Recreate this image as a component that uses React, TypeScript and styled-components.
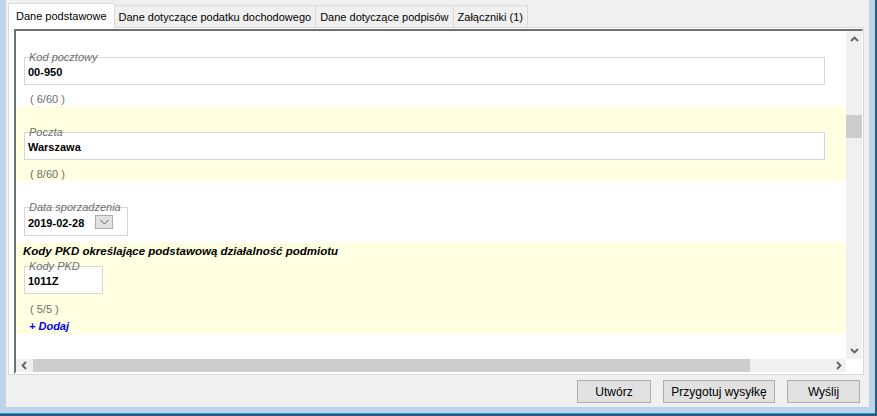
import React from 'react';
import styled, { createGlobalStyle } from 'styled-components';

const GlobalStyle = createGlobalStyle`
  html, body {
    margin: 0;
    padding: 0;
    background: #2a5878;
  }
  body {
    font-family: "Liberation Sans", Arial, sans-serif;
  }
  * {
    box-sizing: border-box;
  }
`;

const Desktop = styled.div`
  width: 877px;
  height: 416px;
  display: flex;
  padding: 0 2px 3px 0;
  background: #2a5878;
  overflow: hidden;
`;

const Frame = styled.div`
  flex: 1;
  display: flex;
  flex-direction: column;
  background: #f0f0f0;
  border: 6px solid #bcd3ea;
  border-top: 0;
  box-shadow: 0 1px 0 #1ba1dc;
  padding: 3px 5px 0 2px;
`;

const TabBar = styled.div`
  display: flex;
  align-items: flex-end;
  height: 24px;
  position: relative;
  z-index: 2;
`;

const Tab = styled.div<{ $active?: boolean }>`
  display: flex;
  align-items: center;
  height: ${(p) => (p.$active ? 25 : 22)}px;
  margin-bottom: ${(p) => (p.$active ? -1 : 0)}px;
  margin-left: ${(p) => (p.$active ? 0 : -1)}px;
  padding: 0 ${(p) => (p.$active ? 7 : 4)}px;
  padding-top: ${(p) => (p.$active ? 0 : 1)}px;
  background: ${(p) => (p.$active ? '#ffffff' : '#f0f0f0')};
  border: 1px solid #d9d9d9;
  border-bottom: 0;
  font-size: 11px;
  color: #000;
  white-space: nowrap;
  position: relative;
  z-index: ${(p) => (p.$active ? 1 : 0)};
`;

const Panel = styled.div`
  height: 348px;
  border: 1px solid #d9d9d9;
  background: #ffffff;
  padding: 1px 0 0 5px;
`;

const Sunken = styled.div`
  display: grid;
  grid-template-columns: 830px 16px;
  grid-template-rows: 328px 13px;
  border-style: solid;
  border-width: 2px 1px 2px 2px;
  border-color: #707070 #ffffff #ffffff #707070;
`;

const Content = styled.div`
  overflow: hidden;
  background: #ffffff;
  display: flex;
  flex-direction: column;
`;

const Section = styled.div<{ $tint?: boolean; $top: number; $bottom: number }>`
  display: flex;
  flex-direction: column;
  align-items: flex-start;
  background: ${(p) => (p.$tint ? '#ffffe1' : '#ffffff')};
  padding: ${(p) => p.$top}px 21px ${(p) => p.$bottom}px 8px;
`;

const SectionTitle = styled.div`
  font-size: 11.5px;
  line-height: 13px;
  font-weight: bold;
  font-style: italic;
  color: #000;
  margin-left: -1px;
  margin-bottom: 1px;
  white-space: nowrap;
`;

const FieldGroup = styled.div<{ $width?: number }>`
  display: flex;
  flex-direction: column;
  align-self: ${(p) => (p.$width ? 'flex-start' : 'stretch')};
  width: ${(p) => (p.$width ? `${p.$width}px` : 'auto')};
`;

const Legend = styled.span`
  display: block;
  position: relative;
  z-index: 1;
  align-self: flex-start;
  margin: 0 0 -7px 5px;
  font-size: 11px;
  line-height: 14px;
  font-style: italic;
  color: #6d6d6d;
  white-space: nowrap;
`;

const FieldBox = styled.div<{ $height: number }>`
  display: flex;
  align-items: center;
  height: ${(p) => p.$height}px;
  padding: 2px 0 0 3px;
  background: #ffffff;
  border: 1px solid #d7d7d7;
`;

const Value = styled.span`
  font-size: 11px;
  font-weight: bold;
  color: #000;
`;

const DropButton = styled.div`
  display: flex;
  align-items: center;
  justify-content: center;
  width: 18px;
  height: 14px;
  margin-left: 11px;
  margin-top: -1px;
  background: #e1e1e1;
  border: 1px solid #adadad;
`;

const Counter = styled.div<{ $gap: number }>`
  margin-top: ${(p) => p.$gap}px;
  padding-left: 6px;
  font-size: 11px;
  line-height: 13px;
  color: #6d6d6d;
  white-space: pre;
`;

const AddLink = styled.a`
  margin-top: 4px;
  padding-left: 5px;
  font-size: 11px;
  line-height: 13px;
  font-weight: bold;
  font-style: italic;
  color: #0000ff;
  cursor: pointer;
`;

const VScroll = styled.div`
  display: flex;
  flex-direction: column;
  background: #f0f0f0;
`;

const HScroll = styled.div`
  display: flex;
  background: #f0f0f0;
  overflow: hidden;
`;

const ArrowCell = styled.div<{ $vertical?: boolean }>`
  display: flex;
  align-items: center;
  justify-content: center;
  flex: none;
  width: 16px;
  height: ${(p) => (p.$vertical ? '17px' : '13px')};
`;

const VThumb = styled.div<{ $offset: number; $size: number }>`
  margin-top: ${(p) => p.$offset}px;
  height: ${(p) => p.$size}px;
  background: #cdcdcd;
  flex: none;
`;

const HThumb = styled.div<{ $offset: number; $size: number }>`
  margin-left: ${(p) => p.$offset}px;
  width: ${(p) => p.$size}px;
  background: #cdcdcd;
  flex: none;
`;

const Fill = styled.div`
  flex: 1;
`;

const Corner = styled.div`
  background: #ffffff;
`;

const Footer = styled.div`
  display: flex;
  justify-content: flex-end;
  gap: 12px;
  margin-top: 5px;
  padding-right: 4px;
`;

const Button = styled.button<{ $width: number }>`
  width: ${(p) => p.$width}px;
  height: 23px;
  padding: 0;
  background: #e1e1e1;
  border: 1px solid #adadad;
  font-family: "Liberation Sans", Arial, sans-serif;
  font-size: 12px;
  color: #000;
`;

type Dir = 'up' | 'down' | 'left' | 'right';

const rotation: Record<Dir, number> = { up: 0, right: 90, down: 180, left: 270 };

function ScrollArrow({ dir }: { dir: Dir }) {
  return (
    <svg width="9" height="9" viewBox="0 0 9 9" style={{ transform: `rotate(${rotation[dir]}deg)` }}>
      <polyline points="1,6 4.5,2.5 8,6" fill="none" stroke="#606060" strokeWidth="1.8" />
    </svg>
  );
}

function DropChevron() {
  return (
    <svg width="9" height="6" viewBox="0 0 9 6">
      <polyline points="0.5,1 4.5,5 8.5,1" fill="none" stroke="#5a5a5a" strokeWidth="1" />
    </svg>
  );
}

export default function App() {
  return (
    <>
      <GlobalStyle />
      <Desktop>
        <Frame>
          <TabBar>
            <Tab $active>Dane podstawowe</Tab>
            <Tab>Dane dotyczące podatku dochodowego</Tab>
            <Tab>Dane dotyczące podpisów</Tab>
            <Tab>Załączniki (1)</Tab>
          </TabBar>
          <Panel>
            <Sunken>
              <Content>
                <Section $top={19} $bottom={0}>
                  <FieldGroup>
                    <Legend>Kod pocztowy</Legend>
                    <FieldBox $height={28}>
                      <Value>00-950</Value>
                    </FieldBox>
                  </FieldGroup>
                  <Counter $gap={8}>( 6/60 )</Counter>
                </Section>
                <Section $tint $top={19} $bottom={0}>
                  <FieldGroup>
                    <Legend>Poczta</Legend>
                    <FieldBox $height={28}>
                      <Value>Warszawa</Value>
                    </FieldBox>
                  </FieldGroup>
                  <Counter $gap={8}>( 8/60 )</Counter>
                </Section>
                <Section $top={19} $bottom={6}>
                  <FieldGroup $width={104}>
                    <Legend>Data sporzadzenia</Legend>
                    <FieldBox $height={29}>
                      <Value>2019-02-28</Value>
                      <DropButton>
                        <DropChevron />
                      </DropButton>
                    </FieldBox>
                  </FieldGroup>
                </Section>
                <Section $tint $top={3} $bottom={1}>
                  <SectionTitle>Kody PKD określające podstawową działalność podmiotu</SectionTitle>
                  <FieldGroup $width={79}>
                    <Legend>Kody PKD</Legend>
                    <FieldBox $height={28}>
                      <Value>1011Z</Value>
                    </FieldBox>
                  </FieldGroup>
                  <Counter $gap={9}>( 5/5 )</Counter>
                  <AddLink>+ Dodaj</AddLink>
                </Section>
              </Content>
              <VScroll>
                <ArrowCell $vertical>
                  <ScrollArrow dir="up" />
                </ArrowCell>
                <VThumb $offset={67} $size={23} />
                <Fill />
                <ArrowCell $vertical>
                  <ScrollArrow dir="down" />
                </ArrowCell>
              </VScroll>
              <HScroll>
                <ArrowCell>
                  <ScrollArrow dir="left" />
                </ArrowCell>
                <HThumb $offset={1} $size={717} />
                <Fill />
                <ArrowCell>
                  <ScrollArrow dir="right" />
                </ArrowCell>
              </HScroll>
              <Corner />
            </Sunken>
          </Panel>
          <Footer>
            <Button $width={74}>Utwórz</Button>
            <Button $width={112}>Przygotuj wysyłkę</Button>
            <Button $width={73}>Wyślij</Button>
          </Footer>
        </Frame>
      </Desktop>
    </>
  );
}
